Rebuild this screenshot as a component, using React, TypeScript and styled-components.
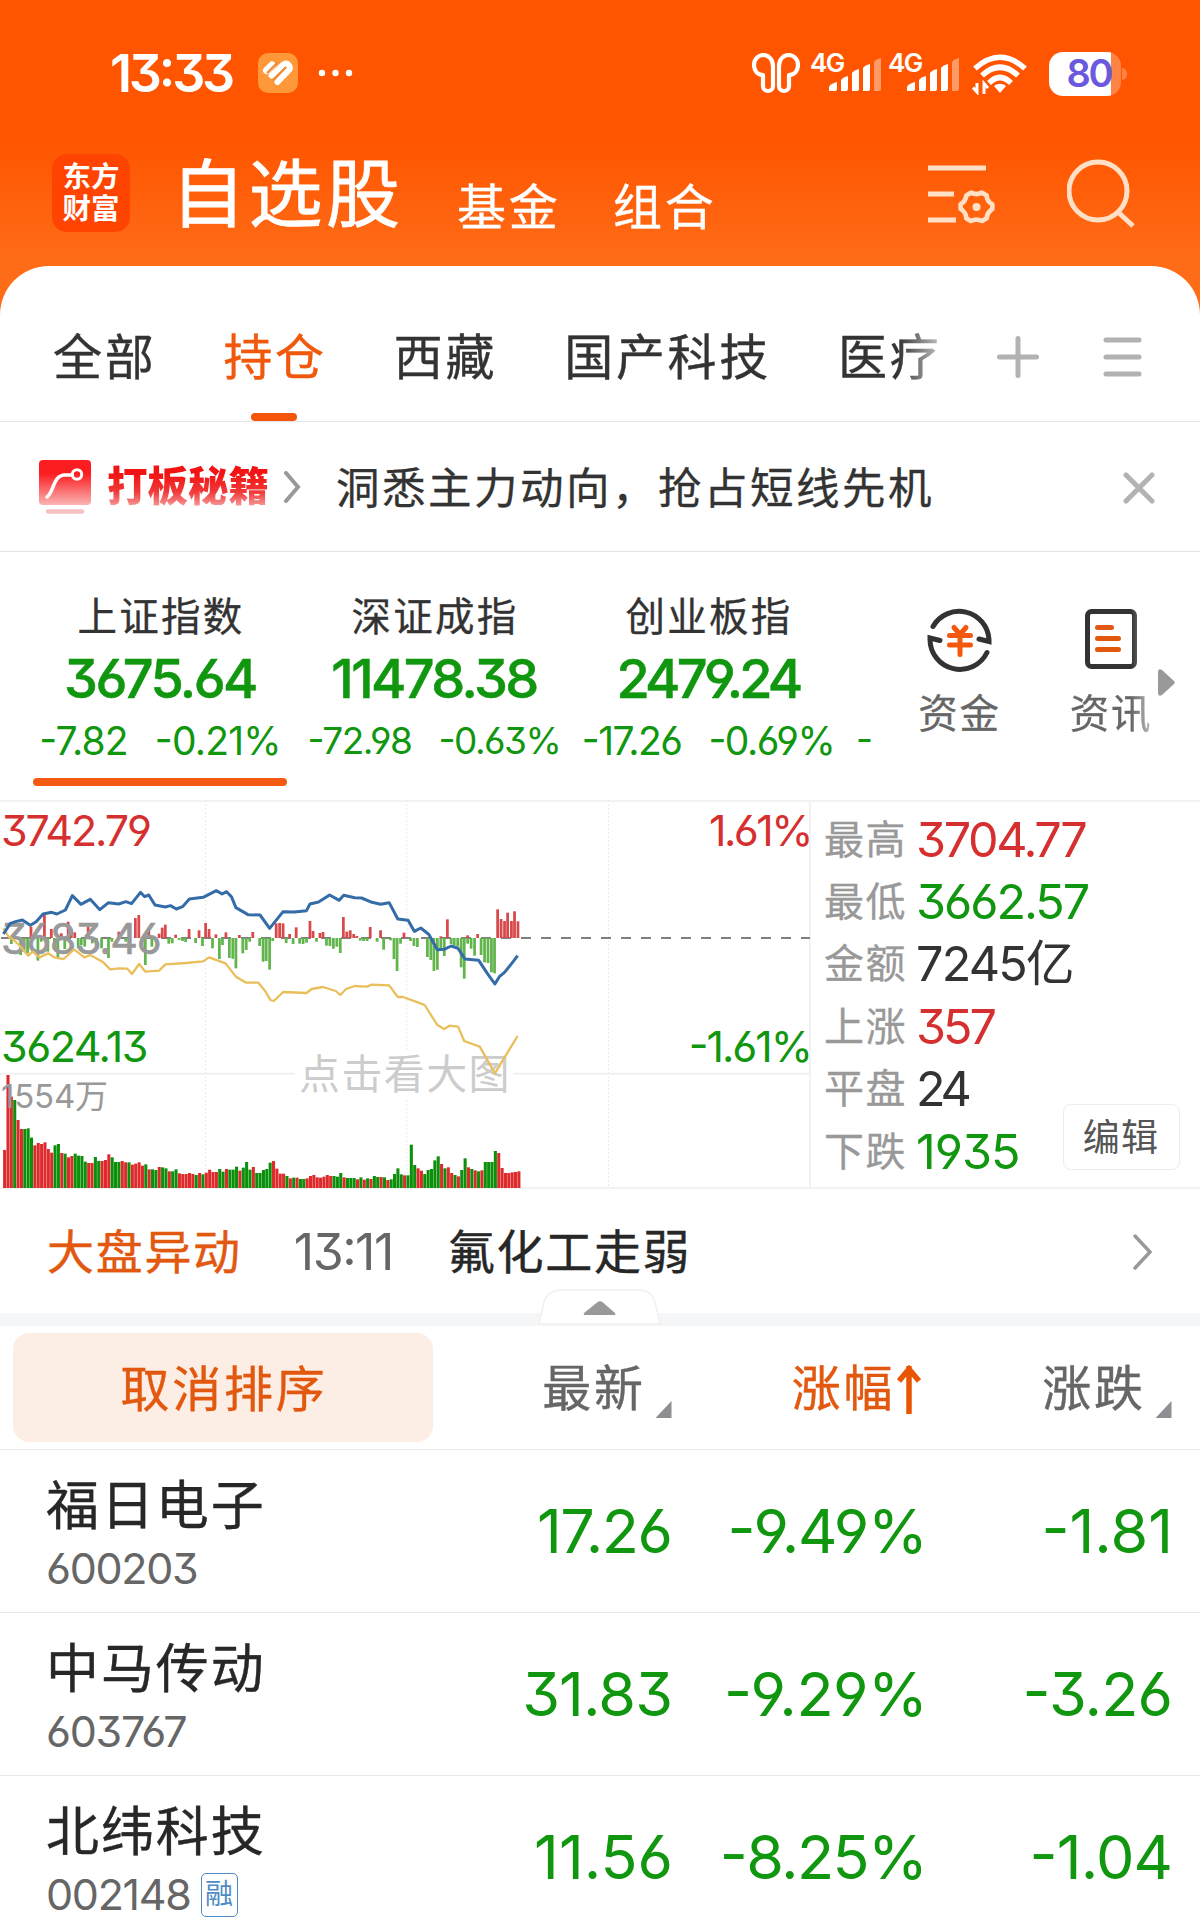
import React from 'react';
import styled, { createGlobalStyle } from 'styled-components';

const GREEN = '#10960f';
const RED = '#d5302f';
const ORANGE = '#e2580f';

const GlobalStyle = createGlobalStyle`
  *, *::before, *::after { box-sizing: border-box; }
  body {
    margin: 0;
    background: #ff6a15;
    font-family: Inter, "Noto Sans CJK SC", sans-serif;
    font-feature-settings: "cv03", "cv04", "cv09", "case";
    color: #333;
  }
  svg { display: block; flex: none; }
`;

const Screen = styled.div`
  width: 1200px;
  height: 1925px;
  overflow: hidden;
  background: linear-gradient(#ff5500 0, #ff5500 140px, #ff6c18 262px);
`;

const Text = styled.span<{ $size: number; $color?: string; $track?: number; $weight?: number; $stroke?: number }>`
  display: block;
  flex: none;
  white-space: nowrap;
  line-height: 1.2;
  font-size: ${(p) => p.$size}px;
  font-weight: ${(p) => p.$weight ?? 400};
  letter-spacing: ${(p) => p.$track ?? 0}px;
  color: ${(p) => p.$color ?? 'inherit'};
  -webkit-text-stroke: ${(p) => p.$stroke ?? 0}px currentColor;
`;

/* ---------- status bar ---------- */

const StatusBar = styled.header`
  display: flex;
  align-items: center;
  justify-content: space-between;
  height: 146px;
  padding: 1px 73px 0 110px;
  color: #fff;
`;

const StatusGroup = styled.div`
  display: flex;
  align-items: center;
`;

const Clock = styled(Text)`
  padding-top: 2px;
`;

const ClockApp = styled.div`
  display: flex;
  align-items: center;
  gap: 20px;
  margin-left: 26px;
`;

const SignalGroup = styled.div`
  display: flex;
  margin: 0 6px 0 10px;
`;

const Signal = styled.div`
  position: relative;
  width: 78px;
  height: 42px;
`;

const SignalLabel = styled.span`
  position: absolute;
  left: 0;
  top: 0;
  font-size: 26px;
  line-height: 20px;
  font-weight: 600;
  letter-spacing: -1.6px;
`;

const SignalBars = styled.svg`
  position: absolute;
  left: 19px;
  top: 5px;
`;

const Battery = styled.div`
  display: flex;
  align-items: center;
  margin-left: 21px;
`;

const BatteryBody = styled.div`
  display: flex;
  align-items: center;
  justify-content: flex-end;
  width: 72px;
  height: 44px;
  padding-right: 10px;
  border-radius: 14px;
  background: linear-gradient(90deg, #fff 62px, #ff8345 62px);
  color: #6a59de;
`;

const BatteryNub = styled.div`
  width: 5px;
  height: 12px;
  margin-left: 1px;
  border-radius: 0 5px 5px 0;
  background: #ff8345;
`;

function SignalIcon() {
  return (
    <Signal>
      <SignalLabel>4G</SignalLabel>
      <SignalBars width="52" height="34" viewBox="0 0 52 34" fill="#fff">
        <path d="M0 33v-4q1-3 8-5v7q0 2-2 2z" />
        <path d="M12 33V22q2-3 7-4v13q0 2-2 2z" />
        <path d="M23 33V15q2-3 7-4v20q0 2-2 2z" />
        <path d="M34 33V10q2-3 7-4v25q0 2-2 2z" />
        <path d="M45 33V4q2-3 7-4v31q0 2-2 2z" opacity=".4" />
      </SignalBars>
    </Signal>
  );
}

/* ---------- brand bar ---------- */

const BrandBar = styled.nav`
  display: flex;
  height: 120px;
  padding-left: 52px;
  color: #fff;
`;

const Logo = styled.div`
  display: flex;
  flex-direction: column;
  align-items: center;
  width: 78px;
  height: 78px;
  margin-top: 8px;
  padding-top: 7px;
  border-radius: 15px;
  background: #ff4300;
  font-size: 28.5px;
  line-height: 32px;
  font-weight: 700;
`;

const BrandTitle = styled(Text)`
  width: 286px;
  margin: 4px 0 0 41px;
`;

const BrandLink = styled(Text)`
  width: 156px;
  margin-top: 33px;
`;

const BrandIcons = styled.div`
  display: flex;
  align-items: flex-start;
  gap: 71px;
  margin: 12.5px 0 0 157px;
`;

/* ---------- group tabs ---------- */

const Sheet = styled.main`
  border-radius: 49px 49px 0 0;
  background: #fff;
`;

const Tabs = styled.div`
  display: flex;
  height: 156px;
  padding-left: 53px;
  border-bottom: 1.5px solid #e4e4e4;
`;

const TabStrip = styled.div`
  display: flex;
  gap: 67px;
  width: 886px;
  overflow: hidden;
  mask-image: linear-gradient(90deg, #000 845px, rgba(0, 0, 0, 0.35) 884px);
`;

const Tab = styled.div<{ $active?: boolean }>`
  display: flex;
  flex: none;
  flex-direction: column;
  align-items: center;
  justify-content: space-between;
  padding-top: 63px;
  color: ${(p) => (p.$active ? '#f0590c' : '#333')};
`;

const TabMark = styled.div`
  width: 46px;
  height: 8px;
  margin-right: 2px;
  border-radius: 4px;
  background: #f4560b;
`;

const TabIcons = styled.div`
  display: flex;
  align-items: center;
  gap: 64px;
  height: 181px;
  margin-left: 58px;
`;

/* ---------- promo ---------- */

const Promo = styled.div`
  display: flex;
  align-items: center;
  height: 130px;
  padding: 0 45px 0 39px;
  border-bottom: 1.5px solid #e4e4e4;
`;

const PromoTitle = styled.span`
  width: 164px;
  margin: 0 12px 0 16px;
  font-size: 40.5px;
  line-height: 50px;
  font-weight: 900;
  white-space: nowrap;
  background: linear-gradient(#f21414 25%, #f03a3a 60%, #f8a5a5 92%);
  background-clip: text;
  color: transparent;
`;

const PromoText = styled(Text)`
  flex: 1;
  margin-left: 33px;
  padding-top: 3px;
`;

const PromoClose = styled.svg`
  margin-top: 2px;
`;

/* ---------- indices ---------- */

const IndexPanel = styled.section`
  display: flex;
  height: 248px;
`;

const IndexStrip = styled.div`
  display: flex;
  width: 873px;
  padding-left: 23px;
  overflow: hidden;
`;

const IndexCell = styled.div`
  display: flex;
  flex: none;
  flex-direction: column;
  align-items: center;
  width: 274px;
  padding-top: 42px;
`;

const IndexName = styled(Text)`
  padding-left: 2px;
`;

const IndexValue = styled(Text)`
  margin-top: 6px;
`;

const IndexChange = styled.div`
  display: flex;
  justify-content: center;
  gap: 27px;
  height: 46px;
  align-items: center;
  margin-top: 6px;
`;

const IndexMark = styled.div`
  width: 254px;
  height: 8px;
  margin-top: 14px;
  border-radius: 4px;
  background: #f35a10;
`;

const NextIndex = styled.div`
  padding: 167px 0 0 11px;
`;

const QuickLink = styled.div<{ $faded?: boolean }>`
  display: flex;
  flex-direction: column;
  align-items: center;
  gap: 13px;
  width: ${(p) => (p.$faded ? 80 : 173)}px;
  padding-top: 52px;
  ${(p) => p.$faded && 'margin-left: 25px; mask-image: linear-gradient(90deg, #000 75%, rgba(0,0,0,.45));'}
`;

const MoreArrow = styled.svg`
  margin: 117px 0 0 7px;
`;

/* ---------- chart and market stats ---------- */

const Market = styled.section`
  display: grid;
  grid-template-columns: 811px 1fr;
  height: 389px;
  border-top: 2px solid #f2f2f2;
  border-bottom: 2px solid #f2f2f2;
`;

const ChartBox = styled.div`
  position: relative;
  border-right: 2px solid #f2f2f2;
`;

const ChartSvg = styled.svg`
  position: absolute;
  inset: -2px auto auto 0;
`;

const ChartLabel = styled(Text)<{ $top: number; $end?: boolean }>`
  position: absolute;
  top: ${(p) => p.$top}px;
  ${(p) => (p.$end ? 'right: -2px;' : 'left: 1px;')}
`;

const ChartHint = styled(Text)`
  position: absolute;
  left: 295px;
  top: 248px;
  z-index: 1;
  width: 218px;
  padding-left: 2px;
  text-align: center;
  background: #fff;
`;

const ChartFront = styled.div`
  position: absolute;
  inset: 0;
  z-index: 2;
`;

const Stats = styled.div`
  position: relative;
  padding: 6.5px 0 0 13px;
`;

const Stat = styled.div`
  display: flex;
  align-items: center;
  gap: 9px;
  height: 62.4px;
`;

const EditButton = styled.button`
  position: absolute;
  right: 20px;
  bottom: 17px;
  width: 117px;
  height: 66px;
  padding: 0 1px 4px 0;
  border: 1.5px solid #ececec;
  border-radius: 8px;
  background: #fff;
  color: #555;
  font: inherit;
  font-size: 37px;
  letter-spacing: 1.2px;
`;

type Bar = [number, number];

const inflow: Bar[] = [
  [90, 395], [129, 357], [149, 402], [178, 415], [198, 380], [207, 405], [217, 412], [256, 395], [345, 410], [393, 369], [403, 360],
  [432, 400], [462, 416], [471, 398], [480, 389], [510, 419], [549, 402], [578, 406], [597, 384], [607, 402],
  [627, 418], [656, 412], [695, 420], [734, 411], [802, 385], [812, 384], [822, 385], [841, 417], [860, 397],
  [900, 378], [909, 408], [929, 414], [938, 411], [997, 366], [1007, 410], [1017, 406], [1027, 417], [1036, 423],
  [1075, 396], [1105, 406], [1173, 413], [1280, 424], [1299, 373], [1358, 421], [1387, 417], [1445, 343],
  [1455, 372], [1465, 378], [1474, 353], [1485, 378], [1494, 349], [1504, 379],
];

const outflow: Bar[] = [
  [33, 447], [60, 480], [70, 470], [80, 475], [110, 497], [120, 440], [139, 470], [158, 450], [168, 490], [188, 462], [227, 460], [236, 450],
  [246, 455], [268, 445], [280, 450], [295, 460], [315, 489], [325, 440], [365, 440], [375, 445], [412, 450],
  [422, 510], [441, 455], [490, 446], [500, 445], [520, 435], [530, 438], [539, 441], [568, 444], [588, 453],
  [617, 460], [637, 492], [646, 450], [666, 489], [676, 491], [685, 520], [705, 475], [715, 465], [725, 440],
  [754, 453], [764, 500], [773, 498], [783, 524], [792, 438], [831, 444], [851, 447], [870, 446], [880, 447],
  [890, 443], [919, 440], [948, 452], [958, 453], [968, 461], [978, 455], [988, 474], [1046, 437], [1056, 438],
  [1066, 438], [1095, 440], [1114, 464], [1134, 436], [1144, 492], [1153, 528], [1163, 446], [1192, 438],
  [1202, 453], [1212, 456], [1241, 486], [1251, 495], [1260, 528], [1270, 524], [1280, 460], [1290, 483],
  [1310, 447], [1319, 452], [1329, 455], [1339, 517], [1348, 551], [1358, 446], [1368, 461], [1378, 482],
  [1397, 480], [1407, 502], [1417, 504], [1427, 532], [1436, 535],
];

const volumes =
  '1065r 840r 905r 915g 975r 1002r 1002g 1000g 1028g 1051r 1044r 1047r 1042r 1062r 1073r 1051g 1047g 1074r 1076g 1087r 1083r 1076g 1082g 1083g 1100g 1104r 1104r 1086g 1098g 1098r 1095r 1078r 1087g 1101g 1101g 1098r 1102r 1102g 1109r 1106r 1102r 1112r 1108g 1123r 1123g 1125g 1116r 1117g 1120g 1129r 1129g 1123g 1135r 1137r 1137r 1134r 1137r 1140g 1134r 1138g 1133r 1124r 1131r 1131r 1122g 1130g 1122r 1124g 1124g 1115g 1127r 1118g 1101g 1124g 1116r 1134g 1134g 1125g 1122g 1103g 1098r 1121r 1136r 1136r 1143g 1150r 1148g 1148r 1152g 1152g 1150r 1143r 1140r 1147r 1148r 1145r 1140r 1143r 1143g 1145g 1134g 1147r 1149g 1149g 1149g 1153r 1147g 1154r 1150g 1152r 1143g 1146g 1146r 1147g 1155r 1153g 1137g 1120g 1138g 1141r 1141g 1049g 1110g 1120r 1127r 1137g 1125g 1122g 1096g 1084g 1107r 1120g 1117r 1134r 1140g 1144r 1125g 1090g 1117r 1122g 1126r 1129g 1126r 1101g 1101g 1101g 1068g 1074r 1119r 1134r 1134r 1132r 1131r 1129r'.split(' ');

const indexLine =
  '10,417 30,385 45,380 65,375 88,391 105,380 125,357 150,352 165,357 190,345 210,302 235,328 262,313 290,344 315,323 345,327 365,320 382,326 408,292 420,305 432,300 450,330 480,336 495,332 512,342 530,335 550,312 590,307 628,287 645,297 658,290 672,305 685,338 720,359 755,360 783,400 822,350 855,351 890,347 900,327 925,321 957,300 985,316 998,301 1030,308 1050,309 1080,322 1105,328 1130,323 1155,372 1185,376 1203,409 1222,399 1245,418 1270,464 1290,463 1310,453 1330,460 1350,492 1390,496 1415,535 1437,567 1450,545 1465,532 1490,500 1503,482';

const averageLine =
  '10,400 25,425 40,435 60,455 82,482 95,470 115,487 140,475 160,488 185,492 215,463 245,487 262,480 300,502 320,523 345,520 370,521 383,537 404,507 422,530 462,527 480,508 540,504 590,499 607,487 655,505 685,545 715,563 750,563 770,588 785,615 795,618 822,591 890,594 905,582 938,576 975,588 988,600 1005,582 1030,573 1065,575 1080,569 1130,571 1155,606 1170,606 1215,623 1233,630 1270,690 1290,702 1305,692 1330,695 1348,738 1393,755 1437,835 1503,723';

const chartProps = { width: 810, height: 388, viewBox: '0 15 2352 1164', preserveAspectRatio: 'none' } as const;

function ChartBack() {
  return (
    <ChartSvg {...chartProps}>
      <path d="M597 15V1179M1182 15V1179M1767 15V1179" vectorEffect="non-scaling-stroke" strokeDasharray="2 2" stroke="#ebebeb" />
      <path d="M0 836H2352" vectorEffect="non-scaling-stroke" stroke="#f0f0f0" strokeWidth="2" />
      <path d="M0 429H2352" stroke="#808080" strokeWidth="2" strokeDasharray="10 10" strokeDashoffset="-1" vectorEffect="non-scaling-stroke" />
      {inflow.map(([x, y]) => (
        <rect key={x} x={x - 4} y={y} width="8" height={429 - y} fill="#d9484a" />
      ))}
      {outflow.map(([x, y]) => (
        <rect key={x} x={x - 4} y={429} width="8" height={y - 429} fill="#62b44d" />
      ))}
      {volumes.map((v, i) => {
        const top = parseInt(v, 10);
        return <rect key={i} x={9 + i * 9.76} y={top} width="8.9" height={1179 - top} fill={v.endsWith('r') ? '#dd2b2b' : '#0c900c'} />;
      })}
    </ChartSvg>
  );
}

function ChartLines() {
  return (
    <ChartSvg {...chartProps} fill="none" strokeLinejoin="round">
      <polyline points={averageLine} stroke="#e9bf5b" strokeWidth="2.3" vectorEffect="non-scaling-stroke" />
      <polyline points={indexLine} stroke="#346ca8" strokeWidth="3" vectorEffect="non-scaling-stroke" />
    </ChartSvg>
  );
}

const stats = [
  { label: '最高', value: '3704.77', color: RED, track: -2.4 },
  { label: '最低', value: '3662.57', color: GREEN, track: -2 },
  { label: '金额', value: '7245亿', color: '#333', track: -1.8 },
  { label: '上涨', value: '357', color: RED, track: -3 },
  { label: '平盘', value: '24', color: '#333', track: -4.2 },
  { label: '下跌', value: '1935', color: GREEN, track: -1 },
];

/* ---------- market alert ---------- */

const Alert = styled.section`
  position: relative;
  display: flex;
  align-items: center;
  height: 137px;
  padding: 2px 47px 0 47px;
  border-bottom: 13px solid #f5f6f8;
`;

const AlertTime = styled(Text)`
  width: 154px;
  margin-left: 52px;
`;

const AlertText = styled(Text)`
  flex: 1;
`;

const Collapse = styled.svg`
  position: absolute;
  left: 538px;
  top: 99px;
`;

/* ---------- stock table ---------- */

const columns = '433px 240px 255px 1fr';

const TableHead = styled.div`
  display: grid;
  grid-template-columns: ${columns};
  height: 124px;
  padding-right: 27px;
  border-bottom: 1.5px solid #e8e8e8;
`;

const ResetSort = styled.button`
  height: 109px;
  margin: 7px 0 0 13px;
  padding: 0 0 5px 2px;
  border: 0;
  border-radius: 16px;
  background: #fdeee5;
  color: ${ORANGE};
  font: inherit;
  font-size: 49px;
  letter-spacing: 2.8px;
  -webkit-text-stroke: 0.4px currentColor;
`;

const HeadCell = styled.div<{ $active?: boolean }>`
  display: flex;
  align-items: center;
  justify-content: flex-end;
  gap: ${(p) => (p.$active ? 1 : 10)}px;
  padding: 3px ${(p) => (p.$active ? 6 : 1.5)}px 0 0;
  color: ${(p) => (p.$active ? ORANGE : '#666')};
`;

const SortCorner = styled.div`
  width: 16px;
  height: 17px;
  margin-top: 41px;
  background: #8e8e93;
  clip-path: polygon(100% 0, 100% 100%, 0 100%);
`;

const StockRow = styled.div`
  display: grid;
  grid-template-columns: ${columns};
  height: 163px;
  padding-right: 27px;
  border-bottom: 1.5px solid #e8e8e8;
`;

const StockTitle = styled.div`
  padding: 25px 0 0 46px;
`;

const StockCode = styled.div`
  display: flex;
  align-items: center;
  gap: 10px;
  height: 61px;
`;

const MarginBadge = styled.span`
  width: 37px;
  height: 44px;
  border: 1.5px solid #4f8bc4;
  border-radius: 5px;
  color: #4f8bc4;
  font-size: 28px;
  line-height: 41px;
  text-align: center;
`;

const Quote = styled(Text)<{ $track: number }>`
  align-self: center;
  justify-self: end;
  margin-right: ${(p) => -p.$track}px;
  padding-top: 2px;
`;

type Cell = { text: string; track: number };

const stocks: { name: string; code: string; margin?: boolean; cells: Cell[] }[] = [
  { name: '福日电子', code: '600203', cells: [{ text: '17.26', track: -1.5 }, { text: '-9.49%', track: -1.2 }, { text: '-1.81', track: 0 }] },
  { name: '中马传动', code: '603767', cells: [{ text: '31.83', track: -0.9 }, { text: '-9.29%', track: -0.5 }, { text: '-3.26', track: -0.9 }] },
  { name: '北纬科技', code: '002148', margin: true, cells: [{ text: '11.56', track: 0 }, { text: '-8.25%', track: -1.6 }, { text: '-1.04', track: -0.8 }] },
];

const indices = [
  { name: '上证指数', value: '3675.64', track: -2.6, diff: '-7.82', rate: '-0.21%', size: 39, subTrack: -0.8, active: true },
  { name: '深证成指', value: '11478.38', track: -2.6, diff: '-72.98', rate: '-0.63%', size: 37, subTrack: -1.5 },
  { name: '创业板指', value: '2479.24', track: -3.8, diff: '-17.26', rate: '-0.69%', size: 39, subTrack: -1.5 },
];

export default function App() {
  return (
    <Screen>
      <GlobalStyle />
      <StatusBar>
        <StatusGroup>
          <Clock $size={52} $weight={600} $track={-3.2}>13:33</Clock>
          <ClockApp>
            <svg width="40" height="40" viewBox="0 0 40 40">
              <rect width="40" height="40" rx="10" fill="#ff9838" />
              <g stroke="#fff" strokeWidth="6" strokeLinecap="round" fill="none">
                <path d="M8.500 17.500 14 12" strokeWidth="7" />
                <path d="M13.500 22.500 25.500 11.500Q29 9.500 31 12.500T30 18L19.500 29" />
              </g>
              <path d="m9 20 11-11M15 27l13-13" stroke="#e98f3c" strokeWidth="2" />
            </svg>
            <svg width="36" height="8" viewBox="0 0 36 8" fill="#fff">
              <circle cx="4" cy="4" r="3.200" /><circle cx="17.500" cy="4" r="3.200" /><circle cx="31" cy="4" r="3.200" />
            </svg>
          </ClockApp>
        </StatusGroup>
        <StatusGroup>
          <svg width="48" height="41" viewBox="0 0 48 41" fill="none" stroke="#fff" strokeWidth="4.200" strokeLinejoin="round">
            <path d="M21 13c0-6-4-11-9.500-11S2 6.500 2 12s3 9.500 9 10v11a5 5 0 0 0 10 0z" />
            <path d="M27 13c0-6 4-11 9.500-11S46 6.500 46 12s-3 9.500-9 10v11a5 5 0 0 1-10 0z" />
          </svg>
          <SignalGroup>
            <SignalIcon />
            <SignalIcon />
          </SignalGroup>
          <svg width="56" height="42" viewBox="0 0 56 42" fill="none" stroke="#fff" strokeWidth="5.500">
            <path d="M3 15.500Q28-7 53 15.500M10 22.500Q28 6 46 22.500M17 30Q28 19 39 30" />
            <path d="M22 33q6-4.500 12 0l-6 7z" fill="#fff" stroke="none" />
            <path d="M1 34.500l4 4.500V30M16 35l-4-4.500V41" strokeWidth="3" />
          </svg>
          <Battery>
            <BatteryBody><Text $size={38} $weight={600} $track={-2.500}>80</Text></BatteryBody>
            <BatteryNub />
          </Battery>
        </StatusGroup>
      </StatusBar>

      <BrandBar>
        <Logo><span>东方</span><span>财富</span></Logo>
        <BrandTitle $size={74} $track={3.500} $stroke={0.800}>自选股</BrandTitle>
        <BrandLink $size={49} $track={2.800} $stroke={0.400}>基金</BrandLink>
        <BrandLink $size={49} $track={2.800} $stroke={0.400}>组合</BrandLink>
        <BrandIcons>
          <svg width="70" height="70" viewBox="0 0 70 70" fill="none" stroke="#ffdfc6" strokeWidth="5">
            <path d="M2 9h58M2 35h26M2 61h28" />
            <path d="M44.500 33.500q6 3 12 0l5 3q0 6 6 9.500v5q-5.500 3.500-6 10l-5 3q-6-3-12 0l-5-3q0-6-6-10v-5q5.500-3.500 6-9.500z" transform="translate(3.500 2.500) scale(.93)" strokeLinejoin="round" />
            <circle cx="50.500" cy="48" r="4" fill="#ffdfc6" stroke="none" />
          </svg>
          <svg width="70" height="72" viewBox="0 0 70 72" fill="none" stroke="#ffdfc6" strokeWidth="5">
            <circle cx="31" cy="32" r="29" />
            <path d="M51 53 66 67" />
          </svg>
        </BrandIcons>
      </BrandBar>

      <Sheet>
        <Tabs>
          <TabStrip>
            {['全部', '持仓', '西藏', '国产科技', '医疗'].map((name) => (
              <Tab key={name} $active={name === '持仓'}>
                <Text $size={49} $track={2.700} $stroke={0.400}>{name}</Text>
                {name === '持仓' && <TabMark />}
              </Tab>
            ))}
          </TabStrip>
          <TabIcons>
            <svg width="42" height="42" viewBox="0 0 42 42" stroke="#b2b2b2" strokeWidth="5" strokeLinecap="round">
              <path d="M21 2.500v37M2.500 21h37" />
            </svg>
            <svg width="40" height="42" viewBox="0 0 40 42" stroke="#b2b2b2" strokeWidth="5" strokeLinecap="round">
              <path d="M3 4h33M3 21h33M3 38h33" />
            </svg>
          </TabIcons>
        </Tabs>

        <Promo>
          <svg width="52" height="54" viewBox="0 0 52 54" fill="none">
            <defs>
              <linearGradient id="promo" x2="0" y2="1">
                <stop offset=".3" stopColor="#fb1d20" />
                <stop offset="1" stopColor="#fbb4b4" />
              </linearGradient>
            </defs>
            <rect width="52" height="45" rx="4" fill="url(#promo)" />
            <path d="M8 37C15 32 14 15 26 15h7" stroke="#fff" strokeWidth="3.500" strokeLinecap="round" />
            <circle cx="38" cy="14.500" r="4.700" stroke="#fff" strokeWidth="3" />
            <path d="M9 51.500h34" stroke="#f8c0c2" strokeWidth="4.500" strokeLinecap="round" />
          </svg>
          <PromoTitle>打板秘籍</PromoTitle>
          <svg width="20" height="32" viewBox="0 0 20 32" fill="none" stroke="#999" strokeWidth="4" strokeLinecap="round">
            <path d="m3 2 12 14L3 30" />
          </svg>
          <PromoText $size={43.500} $track={2.500} $stroke={0.300}>洞悉主力动向，抢占短线先机</PromoText>
          <PromoClose width="32" height="32" viewBox="0 0 32 32" stroke="#b2b2b2" strokeWidth="5" strokeLinecap="round">
            <path d="m3 3 26 26M29 3 3 29" />
          </PromoClose>
        </Promo>

        <IndexPanel>
          <IndexStrip>
            {indices.map((it) => (
              <IndexCell key={it.name}>
                <IndexName $size={39.500} $track={2.300} $stroke={0.300}>{it.name}</IndexName>
                <IndexValue $size={54} $weight={500} $color={GREEN} $track={it.track} $stroke={0.500}>{it.value}</IndexValue>
                <IndexChange>
                  <Text $size={it.size} $color={GREEN} $track={it.subTrack}>{it.diff}</Text>
                  <Text $size={it.size} $color={GREEN} $track={it.subTrack}>{it.rate}</Text>
                </IndexChange>
                {it.active && <IndexMark />}
              </IndexCell>
            ))}
            <NextIndex><Text $size={37} $color={GREEN}>-</Text></NextIndex>
          </IndexStrip>
          <QuickLink>
            <svg width="66" height="74" viewBox="0 0 66 74" fill="none" strokeWidth="5" strokeLinecap="round">
              <g stroke="#333" transform="translate(0 -1.5)">
                <path d="M6 24A30 30 0 0 1 62 37V39L52 36.500" />
                <path d="M60 50A30 30 0 0 1 3 37V35.500L13 38" />
              </g>
              <path d="m27 23.500 6 7 6-7M22.500 31.500h21M22.500 41h21M33 30.500v20" stroke="#f4580c" />
            </svg>
            <Text $size={39.500} $track={1.700} $stroke={0.300} $color="#666">资金</Text>
          </QuickLink>
          <QuickLink $faded>
            <svg width="54" height="74" viewBox="0 0 54 74" fill="none" strokeWidth="5" strokeLinecap="round">
              <g transform="translate(0 1)">
                <rect x="3.500" y="6.500" width="47" height="55" rx="4" stroke="#333" />
                <path d="M13.500 22.500h14M13.500 33.500h21M13.500 44.500h21" stroke="#e2580f" />
              </g>
            </svg>
            <Text $size={39.500} $track={1.700} $stroke={0.300} $color="#666">资讯</Text>
          </QuickLink>
          <MoreArrow width="17" height="27" viewBox="0 0 17 27" fill="#999">
            <path d="M0 3Q0-1 4 1L16 12Q17.500 13.500 16 15L4 26Q0 28 0 24Z" />
          </MoreArrow>
        </IndexPanel>

        <Market>
          <ChartBox>
            <ChartBack />
            <ChartHint $size={41} $track={1.400} $color="#ccc">点击看大图</ChartHint>
            <ChartFront>
              <ChartLabel $top={3} $size={43} $color={RED} $track={-2.100}>3742.79</ChartLabel>
              <ChartLabel $top={111} $size={43} $color="#999" $track={-1.400} $stroke={0.600}>3683.46</ChartLabel>
              <ChartLabel $top={219} $size={43} $color={GREEN} $track={-1.500}>3624.13</ChartLabel>
              <ChartLabel $top={275} $size={33} $color="#999" $track={-0.200}>1554万</ChartLabel>
              <ChartLabel $top={3} $end $size={43} $color={RED} $track={-2.500}>1.61%</ChartLabel>
              <ChartLabel $top={219} $end $size={43} $color={GREEN} $track={-2}>-1.61%</ChartLabel>
            </ChartFront>
            <ChartFront><ChartLines /></ChartFront>
          </ChartBox>
          <Stats>
            {stats.map((s) => (
              <Stat key={s.label}>
                <Text $size={40} $track={1.500} $stroke={0.300} $color="#999">{s.label}</Text>
                <Text $size={48.500} $color={s.color} $track={s.track}>{s.value}</Text>
              </Stat>
            ))}
            <EditButton>编辑</EditButton>
          </Stats>
        </Market>

        <Alert>
          <Text $size={47} $track={1.700} $stroke={0.400} $color={ORANGE}>大盘异动</Text>
          <AlertTime $size={50} $track={-1.500} $color="#666">13:11</AlertTime>
          <AlertText $size={47} $track={1.700} $stroke={0.400} $color="#272727">氟化工走弱</AlertText>
          <svg width="20" height="38" viewBox="0 0 20 38" fill="none" stroke="#999" strokeWidth="3.500" strokeLinecap="round">
            <path d="m2 3 15 16L2 35" />
          </svg>
          <Collapse width="124" height="40" viewBox="0 0 124 40">
            <path d="M1 36 6 14Q10 2 24 2H100Q114 2 117 14L122 36Z" fill="#fff" stroke="#f0f0f0" strokeWidth="1.500" />
            <path d="M46 25 59 14.500Q62 12 65 14.500L77 25Q78 27 76 27H47Q45 27 46 25Z" fill="#999" />
          </Collapse>
        </Alert>

        <TableHead>
          <ResetSort>取消排序</ResetSort>
          <HeadCell>
            <Text $size={49} $track={2.600} $stroke={0.400}>最新</Text>
            <SortCorner />
          </HeadCell>
          <HeadCell $active>
            <Text $size={49} $track={2.600} $stroke={0.400}>涨幅</Text>
            <svg width="26" height="52" viewBox="0 0 26 52" fill="none" stroke="#ea5504" strokeWidth="5.500">
              <path d="M13 3v48M3 18 13 6l10 12" />
            </svg>
          </HeadCell>
          <HeadCell>
            <Text $size={49} $track={2.600} $stroke={0.400}>涨跌</Text>
            <SortCorner />
          </HeadCell>
        </TableHead>

        {stocks.map((s) => (
          <StockRow key={s.code}>
            <StockTitle>
              <Text $size={53} $track={1.900} $stroke={0.400} $color="#272727">{s.name}</Text>
              <StockCode>
                <Text $size={43} $track={-1.300} $color="#666">{s.code}</Text>
                {s.margin && <MarginBadge>融</MarginBadge>}
              </StockCode>
            </StockTitle>
            {s.cells.map((c) => (
              <Quote key={c.text} $size={61} $color={GREEN} $track={c.track}>{c.text}</Quote>
            ))}
          </StockRow>
        ))}
      </Sheet>
    </Screen>
  );
}
